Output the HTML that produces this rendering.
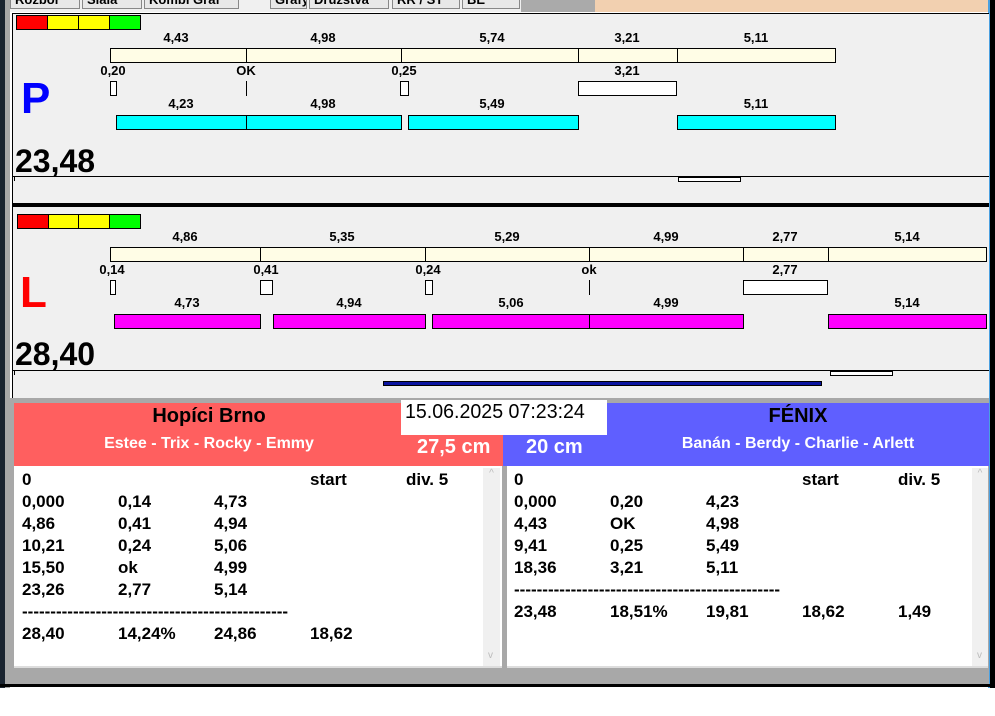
<!DOCTYPE html>
<html><head><meta charset="utf-8"><style>
*{margin:0;padding:0;box-sizing:border-box}
body{width:995px;height:716px;background:#fff;position:relative;overflow:hidden;font-family:"Liberation Sans",sans-serif}
div{position:absolute}
.b{border:1px solid #000}
.lb{font:bold 13px "Liberation Sans",sans-serif;color:#000;transform:translateX(-50%);white-space:nowrap}
.cr{background:#fffde6}
.cy{background:#00ffff}
.mg{background:#ff00ff}
.w{background:#fff}
.n{font-family:"Liberation Sans",sans-serif;font-weight:bold;white-space:nowrap}
.t{font:bold 17px "Liberation Sans",sans-serif;line-height:22px;white-space:nowrap}
.t p{height:22px}
.t span{display:inline-block;width:96px}
.tab{top:-6px;height:15px;background:#e8e8e8;border:1px solid #888;font:bold 13px "Liberation Sans",sans-serif;color:#000;overflow:hidden;line-height:10px;padding-left:4px}
</style></head><body>
<div style="left:0;top:0;width:5px;height:688px;background:#1a2430"></div>
<div style="left:5px;top:0;width:5px;height:688px;background:#a8a8a8"></div>
<div style="left:10px;top:0;width:980px;height:12px;background:#f0f0f0"></div>
<div style="left:595px;top:0;width:395px;height:12px;background:#f2d0b0"></div>
<div style="left:521px;top:0;width:74px;height:12px;background:#aaa"></div>
<div class="tab" style="left:10px;width:70px">Rozbor</div>
<div class="tab" style="left:82px;width:60px">Slala</div>
<div class="tab" style="left:144px;width:95px">Kombi Graf</div>
<div class="tab" style="left:270px;width:37px">Grafy</div>
<div class="tab" style="left:309px;width:80px">Družstva</div>
<div class="tab" style="left:392px;width:68px">RR / ST</div>
<div class="tab" style="left:462px;width:58px">BE</div>
<div style="left:989px;top:0;width:6px;height:688px;background:#000"></div>
<div style="left:988px;top:0;width:2px;height:688px;background:#4aa0e0"></div>
<!-- panel 1 -->
<div style="left:12px;top:13px;width:977px;height:190px;background:#f0f0f0;border-left:1px solid #000;border-top:1px solid #000"></div>
<div class="b" style="left:16px;top:15px;width:32px;height:15px;background:#f00"></div>
<div class="b" style="left:47px;top:15px;width:32px;height:15px;background:#ff0"></div>
<div class="b" style="left:78px;top:15px;width:32px;height:15px;background:#ff0"></div>
<div class="b" style="left:109px;top:15px;width:32px;height:15px;background:#0f0"></div>
<div class="lb" style="left:176px;top:30px">4,43</div>
<div class="lb" style="left:323px;top:30px">4,98</div>
<div class="lb" style="left:492px;top:30px">5,74</div>
<div class="lb" style="left:627px;top:30px">3,21</div>
<div class="lb" style="left:756px;top:30px">5,11</div>
<div class="b cr" style="left:110px;top:48px;width:137px;height:15px"></div>
<div class="b cr" style="left:246px;top:48px;width:156px;height:15px"></div>
<div class="b cr" style="left:401px;top:48px;width:178px;height:15px"></div>
<div class="b cr" style="left:578px;top:48px;width:100px;height:15px"></div>
<div class="b cr" style="left:677px;top:48px;width:159px;height:15px"></div>
<div class="lb" style="left:113px;top:63px">0,20</div>
<div class="lb" style="left:246px;top:63px">OK</div>
<div class="lb" style="left:404px;top:63px">0,25</div>
<div class="lb" style="left:627px;top:63px">3,21</div>
<div class="b w" style="left:110px;top:81px;width:7px;height:15px"></div>
<div style="left:246px;top:81px;width:1px;height:15px;background:#000"></div>
<div class="b w" style="left:400px;top:81px;width:9px;height:15px"></div>
<div class="b w" style="left:578px;top:81px;width:99px;height:15px"></div>
<div style="left:21px;top:74px;font:bold 44px 'Liberation Sans',sans-serif;color:#0000ff">P</div>
<div class="lb" style="left:181px;top:96px">4,23</div>
<div class="lb" style="left:323px;top:96px">4,98</div>
<div class="lb" style="left:492px;top:96px">5,49</div>
<div class="lb" style="left:756px;top:96px">5,11</div>
<div class="b cy" style="left:116px;top:115px;width:131px;height:15px"></div>
<div class="b cy" style="left:246px;top:115px;width:156px;height:15px"></div>
<div class="b cy" style="left:408px;top:115px;width:171px;height:15px"></div>
<div class="b cy" style="left:677px;top:115px;width:159px;height:15px"></div>
<div style="left:15px;top:143px;font:bold 32px 'Liberation Sans',sans-serif">23,48</div>
<div style="left:13px;top:176px;width:976px;height:1px;background:#000"></div>
<div style="left:14px;top:176px;width:1px;height:5px;background:#000"></div>
<div class="b w" style="left:678px;top:177px;width:63px;height:5px"></div>
<div style="left:12px;top:203px;width:977px;height:4px;background:#000"></div>
<!-- panel 2 -->
<div style="left:12px;top:207px;width:977px;height:191px;background:#f0f0f0;border-left:1px solid #000"></div>
<div class="b" style="left:17px;top:214px;width:32px;height:15px;background:#f00"></div>
<div class="b" style="left:48px;top:214px;width:31px;height:15px;background:#ff0"></div>
<div class="b" style="left:78px;top:214px;width:32px;height:15px;background:#ff0"></div>
<div class="b" style="left:109px;top:214px;width:32px;height:15px;background:#0f0"></div>
<div class="lb" style="left:185px;top:229px">4,86</div>
<div class="lb" style="left:342px;top:229px">5,35</div>
<div class="lb" style="left:507px;top:229px">5,29</div>
<div class="lb" style="left:666px;top:229px">4,99</div>
<div class="lb" style="left:785px;top:229px">2,77</div>
<div class="lb" style="left:907px;top:229px">5,14</div>
<div class="b cr" style="left:110px;top:247px;width:151px;height:15px"></div>
<div class="b cr" style="left:260px;top:247px;width:166px;height:15px"></div>
<div class="b cr" style="left:425px;top:247px;width:165px;height:15px"></div>
<div class="b cr" style="left:589px;top:247px;width:155px;height:15px"></div>
<div class="b cr" style="left:743px;top:247px;width:86px;height:15px"></div>
<div class="b cr" style="left:828px;top:247px;width:159px;height:15px"></div>
<div class="lb" style="left:112px;top:262px">0,14</div>
<div class="lb" style="left:266px;top:262px">0,41</div>
<div class="lb" style="left:428px;top:262px">0,24</div>
<div class="lb" style="left:589px;top:262px">ok</div>
<div class="lb" style="left:785px;top:262px">2,77</div>
<div class="b w" style="left:110px;top:280px;width:6px;height:15px"></div>
<div class="b w" style="left:260px;top:280px;width:13px;height:15px"></div>
<div class="b w" style="left:425px;top:280px;width:8px;height:15px"></div>
<div style="left:589px;top:280px;width:1px;height:15px;background:#000"></div>
<div class="b w" style="left:743px;top:280px;width:85px;height:15px"></div>
<div style="left:20px;top:268px;font:bold 44px 'Liberation Sans',sans-serif;color:#ff0000">L</div>
<div class="lb" style="left:187px;top:295px">4,73</div>
<div class="lb" style="left:349px;top:295px">4,94</div>
<div class="lb" style="left:511px;top:295px">5,06</div>
<div class="lb" style="left:666px;top:295px">4,99</div>
<div class="lb" style="left:907px;top:295px">5,14</div>
<div class="b mg" style="left:114px;top:314px;width:147px;height:15px"></div>
<div class="b mg" style="left:273px;top:314px;width:153px;height:15px"></div>
<div class="b mg" style="left:432px;top:314px;width:158px;height:15px"></div>
<div class="b mg" style="left:589px;top:314px;width:155px;height:15px"></div>
<div class="b mg" style="left:828px;top:314px;width:159px;height:15px"></div>
<div style="left:15px;top:336px;font:bold 32px 'Liberation Sans',sans-serif">28,40</div>
<div style="left:13px;top:370px;width:976px;height:1px;background:#000"></div>
<div style="left:14px;top:370px;width:1px;height:5px;background:#000"></div>
<div class="b w" style="left:830px;top:371px;width:63px;height:5px"></div>
<div style="left:383px;top:381px;width:439px;height:5px;background:#0a14a0;border:1px solid #000"></div>
<!-- bottom -->
<div style="left:10px;top:398px;width:979px;height:288px;background:#a8a8a8"></div>
<div style="left:14px;top:403px;width:489px;height:63px;background:#ff5f5f"></div>
<div style="left:503px;top:403px;width:486px;height:63px;background:#5f5fff"></div>
<div class="n" style="left:14px;top:405px;width:390px;text-align:center;font-size:20px">Hopíci Brno</div>
<div class="n" style="left:14px;top:435px;width:390px;text-align:center;font-size:16px;color:#fff">Estee - Trix - Rocky - Emmy</div>
<div class="n" style="left:417px;top:436px;font-size:20px;color:#fff">27,5 cm</div>
<div class="n" style="left:526px;top:436px;font-size:20px;color:#fff">20 cm</div>
<div class="n" style="left:607px;top:405px;width:382px;text-align:center;font-size:20px">FÉNIX</div>
<div class="n" style="left:607px;top:435px;width:382px;text-align:center;font-size:16px;color:#fff">Banán - Berdy - Charlie - Arlett</div>
<div style="left:401px;top:400px;width:206px;height:35px;background:#fff"></div>
<div style="left:405px;top:401px;font:20px 'Liberation Sans',sans-serif;white-space:nowrap;transform:scaleX(0.98);transform-origin:left">15.06.2025 07:23:24</div>
<div style="left:14px;top:466px;width:488px;height:202px;background:#fff;border-bottom:2px solid #ddd"></div>
<div style="left:483px;top:468px;width:17px;height:198px;background:#f0f0f0;color:#bbb;font-size:10px;text-align:center">^<span style="position:absolute;left:5px;top:182px">v</span></div>
<div class="t" style="left:22px;top:469px">
<p><span>0</span><span></span><span></span><span>start</span><span>div. 5</span></p>
<p><span>0,000</span><span>0,14</span><span>4,73</span></p>
<p><span>4,86</span><span>0,41</span><span>4,94</span></p>
<p><span>10,21</span><span>0,24</span><span>5,06</span></p>
<p><span>15,50</span><span>ok</span><span>4,99</span></p>
<p><span>23,26</span><span>2,77</span><span>5,14</span></p>
<p>-----------------------------------------------</p>
<p><span>28,40</span><span>14,24%</span><span>24,86</span><span>18,62</span></p>
</div>
<div style="left:507px;top:466px;width:481px;height:202px;background:#fff;border-bottom:2px solid #ddd"></div>
<div style="left:972px;top:468px;width:16px;height:198px;background:#f0f0f0;color:#bbb;font-size:10px;text-align:center">^<span style="position:absolute;left:5px;top:182px">v</span></div>
<div class="t" style="left:514px;top:469px">
<p><span>0</span><span></span><span></span><span>start</span><span>div. 5</span></p>
<p><span>0,000</span><span>0,20</span><span>4,23</span></p>
<p><span>4,43</span><span>OK</span><span>4,98</span></p>
<p><span>9,41</span><span>0,25</span><span>5,49</span></p>
<p><span>18,36</span><span>3,21</span><span>5,11</span></p>
<p>-----------------------------------------------</p>
<p><span>23,48</span><span>18,51%</span><span>19,81</span><span>18,62</span><span>1,49</span></p>
</div>
<div style="left:0;top:684px;width:995px;height:3px;background:#000"></div>
</body></html>
